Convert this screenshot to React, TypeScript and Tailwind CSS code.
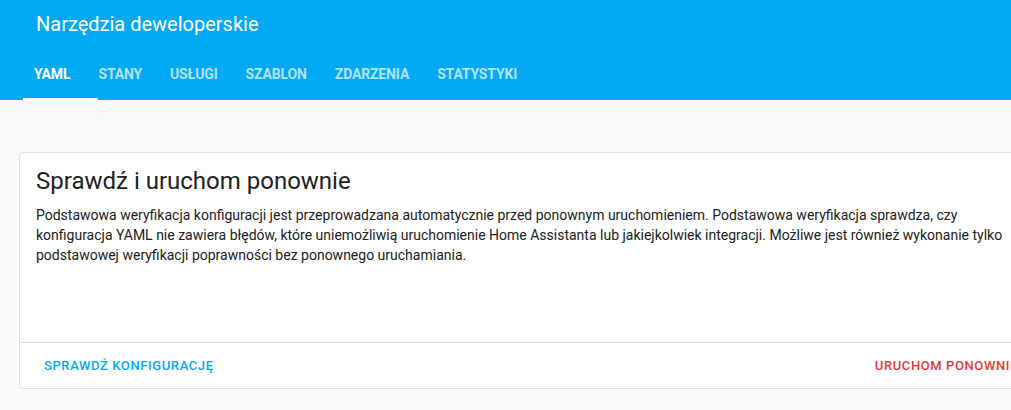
import React from "react";

const tabs = ["YAML", "STANY", "USŁUGI", "SZABLON", "ZDARZENIA", "STATYSTYKI"];

export default function App() {
  return (
    <div
      className="w-[1011px] h-[410px] overflow-hidden bg-[#fafafa]"
      style={{ fontFamily: "Roboto, 'Noto Sans', sans-serif" }}
    >
      <header className="bg-[#03a9f4] h-[100px] flex flex-col text-white">
        <div className="h-[48px] flex items-center pl-[36px]">
          <span className="text-[20px] leading-[28px] font-normal">Narzędzia deweloperskie</span>
        </div>
        <nav className="relative h-[52px] flex items-center pl-[20px]">
          {tabs.map((t, i) => (
            <div
              key={t}
              className={
                "px-[14px] text-[14px] font-bold leading-[20px] tracking-[-0.15px] " +
                (i === 0 ? "text-white" : "text-white/70")
              }
            >
              {t}
            </div>
          ))}
          <div className="absolute left-[23px] bottom-0 w-[75px] h-[2px] bg-white" />
        </nav>
      </header>
      <main className="pt-[52px] pl-[19px]">
        <section className="w-[1016px] h-[237px] bg-white border border-[#e0e0e0] rounded-[4px] flex flex-col">
          <h2 className="px-[16px] pt-[12px] pb-[8px] text-[24px] leading-[32px] text-[#212121] font-normal">
            Sprawdź i uruchom ponownie
          </h2>
          <div className="flex-1 pl-[16px] pr-[20px] pb-[16px] text-[14px] leading-[20px] text-[#212121]">
            Podstawowa weryfikacja konfiguracji jest przeprowadzana automatycznie przed ponownym uruchomieniem. Podstawowa weryfikacja sprawdza, czy konfiguracja YAML nie zawiera błędów, które uniemożliwią uruchomienie Home Assistanta lub jakiejkolwiek integracji. Możliwe jest również wykonanie tylko podstawowej weryfikacji poprawności bez ponownego uruchamiania.
          </div>
          <div className="border-t border-[#e0e0e0] h-[46px] flex items-center justify-between px-[8px]">
            <button className="h-[36px] px-[16px] text-[13px] font-medium tracking-[0.6px] text-[#03a9f4]">
              SPRAWDŹ KONFIGURACJĘ
            </button>
            <button className="h-[36px] px-[8px] text-[13px] font-medium tracking-[0.6px] text-[#e53935]">
              URUCHOM PONOWNIE
            </button>
          </div>
        </section>
      </main>
    </div>
  );
}
